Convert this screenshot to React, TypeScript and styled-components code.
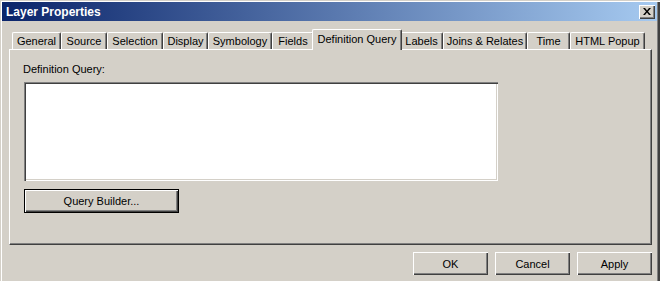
import React from 'react'
import styled, { createGlobalStyle, css } from 'styled-components'

const FACE = '#d4d0c8'

const GlobalStyle = createGlobalStyle`
  html, body {
    margin: 0;
    padding: 0;
    background: ${FACE};
  }
  body {
    font-family: 'Liberation Sans', Arial, sans-serif;
    font-size: 11px;
    color: #000;
  }
`

const raised = css`
  box-shadow: inset 1px 1px 0 #ffffff, inset -1px -1px 0 #404040, inset -2px -2px 0 #808080;
`

const Window = styled.div`
  box-sizing: border-box;
  width: 660px;
  height: 290px;
  padding: 2px 3px 0 2px;
  background: ${FACE};
  box-shadow: inset 1px 1px 0 ${FACE}, inset 2px 2px 0 #ffffff, inset -2px 0 0 #404040,
    inset -3px 0 0 #808080;
  display: flex;
  flex-direction: column;
`

const TitleBar = styled.div`
  height: 19px;
  display: flex;
  align-items: center;
  justify-content: space-between;
  padding: 0 2px 0 4px;
  background: linear-gradient(to right, #0a246a, #a6caf0);
`

const Title = styled.span`
  color: #fff;
  font-weight: bold;
  font-size: 12px;
  line-height: 14px;
`

const CloseButton = styled.button`
  box-sizing: border-box;
  width: 16px;
  height: 14px;
  padding: 0;
  border: none;
  background: ${FACE};
  display: flex;
  align-items: center;
  justify-content: center;
  ${raised};
`

const Body = styled.div`
  padding: 8px 6px 0 7px;
`

const TabRow = styled.div`
  display: flex;
  align-items: flex-end;
  height: 20px;
  padding-left: 3px;
  position: relative;
  z-index: 1;
`

const Tab = styled.div<{ $w: number; $active?: boolean }>`
  box-sizing: border-box;
  width: ${({ $w, $active }) => ($active ? $w + 4 : $w)}px;
  height: 17px;
  padding-top: 2px;
  text-align: center;
  line-height: 13px;
  white-space: nowrap;
  background: ${FACE};
  border-top: 1px solid #fff;
  border-left: 1px solid #fff;
  border-right: 1px solid #404040;
  border-radius: 2px 2px 0 0;
  box-shadow: inset -1px 0 0 #808080;

  ${({ $active }) =>
    $active &&
    css`
      height: 21px;
      margin: 0 -2px -1px -2px;
      padding-top: 3px;
      position: relative;
      z-index: 2;
    `}
`

const Panel = styled.div`
  box-sizing: border-box;
  width: 643px;
  height: 196px;
  padding: 13px 14px 0 14px;
  border-top: 1px solid #fff;
  border-left: 1px solid #fff;
  border-right: 1px solid #404040;
  border-bottom: 1px solid #404040;
  box-shadow: inset -1px -1px 0 #808080;
  display: flex;
  flex-direction: column;
  align-items: flex-start;
`

const FieldLabel = styled.div`
  line-height: 13px;
  margin-left: -1px;
`

const QueryBox = styled.textarea`
  box-sizing: border-box;
  width: 474px;
  height: 99px;
  margin: 6px 0 0 0;
  padding: 2px;
  resize: none;
  background: #fff;
  border: none;
  outline: none;
  font: inherit;
  box-shadow: inset 1px 1px 0 #808080, inset 2px 2px 0 #404040, inset -1px -1px 0 #ffffff,
    inset -2px -2px 0 ${FACE};
`

const Button = styled.button<{ $w: number; $default?: boolean }>`
  box-sizing: border-box;
  width: ${({ $w }) => $w}px;
  height: 23px;
  padding: 0;
  border: none;
  background: ${FACE};
  font-family: 'Liberation Sans', Arial, sans-serif;
  font-size: 11px;
  color: #000;
  ${raised};

  ${({ $default }) =>
    $default &&
    css`
      height: 24px;
      border: 1px solid #000;
    `}
`

const QueryButton = styled(Button)`
  margin-top: 8px;
`

const Footer = styled.div`
  display: flex;
  justify-content: flex-end;
  gap: 7px;
  width: 643px;
  margin-top: 7px;
`

const tabs: { label: string; w: number; active?: boolean }[] = [
  { label: 'General', w: 49 },
  { label: 'Source', w: 46 },
  { label: 'Selection', w: 56 },
  { label: 'Display', w: 45 },
  { label: 'Symbology', w: 64 },
  { label: 'Fields', w: 42 },
  { label: 'Definition Query', w: 86, active: true },
  { label: 'Labels', w: 43 },
  { label: 'Joins & Relates', w: 84 },
  { label: 'Time', w: 43 },
  { label: 'HTML Popup', w: 75 },
]

const CloseGlyph = () => (
  <svg width="8" height="7" viewBox="0 0 8 7">
    <path d="M0 0h2l2 2.5L6 0h2L5 3.5 8 7H6L4 4.5 2 7H0l3-3.5z" fill="#000" />
  </svg>
)

export default function App() {
  return (
    <>
      <GlobalStyle />
      <Window>
        <TitleBar>
          <Title>Layer Properties</Title>
          <CloseButton aria-label="Close">
            <CloseGlyph />
          </CloseButton>
        </TitleBar>
        <Body>
          <TabRow>
            {tabs.map((t) => (
              <Tab key={t.label} $w={t.w} $active={t.active}>
                {t.label}
              </Tab>
            ))}
          </TabRow>
          <Panel>
            <FieldLabel>Definition Query:</FieldLabel>
            <QueryBox />
            <QueryButton $w={155} $default>
              Query Builder...
            </QueryButton>
          </Panel>
          <Footer>
            <Button $w={75}>OK</Button>
            <Button $w={75}>Cancel</Button>
            <Button $w={75}>Apply</Button>
          </Footer>
        </Body>
      </Window>
    </>
  )
}
